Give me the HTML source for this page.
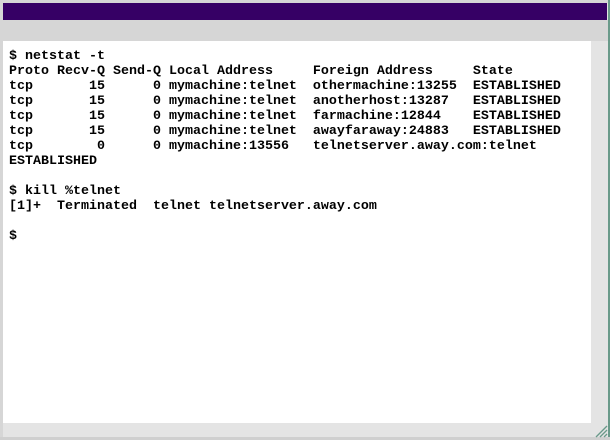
<!DOCTYPE html>
<html><head><style>
html,body{margin:0;padding:0}
body{width:610px;height:440px;background:#e4e4e4;position:relative;overflow:hidden}
.bar{position:absolute;left:3px;top:3px;width:604px;height:17px;background:#360065}
.strip{position:absolute;left:0;top:20px;width:608px;height:21px;background:#d6d6d6}
.top{position:absolute;left:0;top:0;width:610px;height:3px;background:#d6d6d6}
.lft{position:absolute;left:0;top:0;width:3px;height:440px;background:#d6d6d6}
.white{position:absolute;left:3px;top:41px;width:588px;height:382px;background:#fff}
.teal{position:absolute;left:608px;top:0;width:2px;height:440px;background:#6a9a8a}
.bot{position:absolute;left:0;top:437px;width:610px;height:3px;background:#cfcfcf}
pre{position:absolute;left:9px;top:49px;margin:0;font-family:"Liberation Mono",monospace;font-weight:bold;font-size:13.33px;line-height:15px;color:#000}
</style></head><body>
<div class="top"></div><div class="lft"></div>
<div class="bar"></div><div class="strip"></div>
<div class="white"></div><div class="teal"></div><div class="bot"></div>
<svg style="position:absolute;left:595px;top:425px" width="13" height="13"><g stroke="#6a9a8a" stroke-width="1.3"><line x1="1" y1="12" x2="12" y2="1"/><line x1="5" y1="12" x2="12" y2="5"/><line x1="9" y1="12" x2="12" y2="9"/></g></svg>
<pre>$ netstat -t
Proto Recv-Q Send-Q Local Address     Foreign Address     State
tcp       15      0 mymachine:telnet  othermachine:13255  ESTABLISHED
tcp       15      0 mymachine:telnet  anotherhost:13287   ESTABLISHED
tcp       15      0 mymachine:telnet  farmachine:12844    ESTABLISHED
tcp       15      0 mymachine:telnet  awayfaraway:24883   ESTABLISHED
tcp        0      0 mymachine:13556   telnetserver.away.com:telnet
ESTABLISHED

$ kill %telnet
[1]+  Terminated  telnet telnetserver.away.com

$</pre>
</body></html>
